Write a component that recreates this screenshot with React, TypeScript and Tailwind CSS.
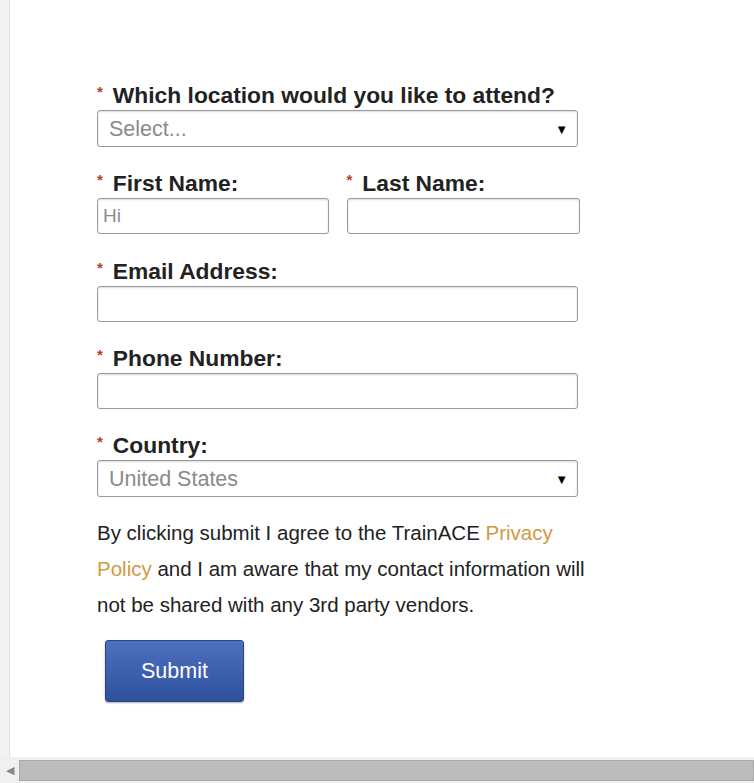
import React from "react";

const Star = () => <span className="text-[#c0392b] text-[15px] mr-[10px] relative -top-[3px]">*</span>;

function Label({ children }: { children: React.ReactNode }) {
  return (
    <div className="flex items-center h-[22px] text-[22.8px] font-bold text-[#222] whitespace-nowrap">
      <Star />
      <span>{children}</span>
    </div>
  );
}

function SelectBox({ text }: { text: string }) {
  return (
    <div className="mt-[4px] h-[37px] border border-[#9a9a9a] rounded-[3px] shadow-[inset_0_1px_2px_rgba(0,0,0,0.15)] flex items-center justify-between pl-[11px] pr-[9px] pt-[2px] bg-white">
      <span className="text-[21.5px] text-[#8a8a8a]">{text}</span>
      <span className="text-[13px] text-black">▼</span>
    </div>
  );
}

function Input({ value }: { value?: string }) {
  return (
    <div className="mt-[4px] h-[36px] border border-[#9a9a9a] rounded-[3px] shadow-[inset_0_1px_2px_rgba(0,0,0,0.15)] flex items-center pl-[5px] bg-white">
      <span className="text-[19px] text-[#8a8a8a]">{value}</span>
    </div>
  );
}

export default function App() {
  return (
    <div className="w-[754px] h-[783px] flex flex-col bg-white overflow-hidden" style={{ fontFamily: '"Liberation Sans", Arial, sans-serif' }}>
      <div className="flex flex-1 min-h-0">
        <div className="w-[10px] bg-[#f2f2f2] border-r border-[#dcdcdc]" />
        <div className="flex-1 pl-[87px] pt-[84px]">
          <div className="w-[483px]">
            <Label>Which location would you like to attend?</Label>
            <div className="w-[481px]">
              <SelectBox text="Select..." />
            </div>

            <div className="flex mt-[25px]">
              <div className="w-[232px]">
                <Label>First Name:</Label>
                <Input value="Hi" />
              </div>
              <div className="w-[234px] ml-[18px]">
                <Label>Last Name:</Label>
                <Input />
              </div>
            </div>

            <div className="mt-[26px] w-[481px]">
              <Label>Email Address:</Label>
              <Input />
            </div>

            <div className="mt-[25px] w-[481px]">
              <Label>Phone Number:</Label>
              <Input />
            </div>

            <div className="mt-[25px] w-[481px]">
              <Label>Country:</Label>
              <SelectBox text="United States" />
            </div>

            <p className="mt-[18px] text-[20.5px] leading-[36px] text-[#222] w-[500px]">
              By clicking submit I agree to the TrainACE <span className="text-[#d19a3e]">Privacy Policy</span> and I am aware that my contact information will not be shared with any 3rd party vendors.
            </p>

            <button className="mt-[17px] ml-[8px] w-[139px] h-[62px] rounded-[3px] border border-[#2a4585] bg-gradient-to-b from-[#4d70bf] to-[#2f519c] text-white text-[21.5px] shadow-[0_1px_2px_rgba(0,0,0,0.3)]">
              Submit
            </button>
          </div>
        </div>
      </div>
      <div className="h-[26px] bg-[#f0f0f0] flex items-center">
        <div className="w-[19px] flex justify-center text-[#888] text-[11px]">◀</div>
        <div className="flex-1 h-[21px] bg-[#bcbcbc] border border-[#a8a8a8]" />
      </div>
    </div>
  );
}
